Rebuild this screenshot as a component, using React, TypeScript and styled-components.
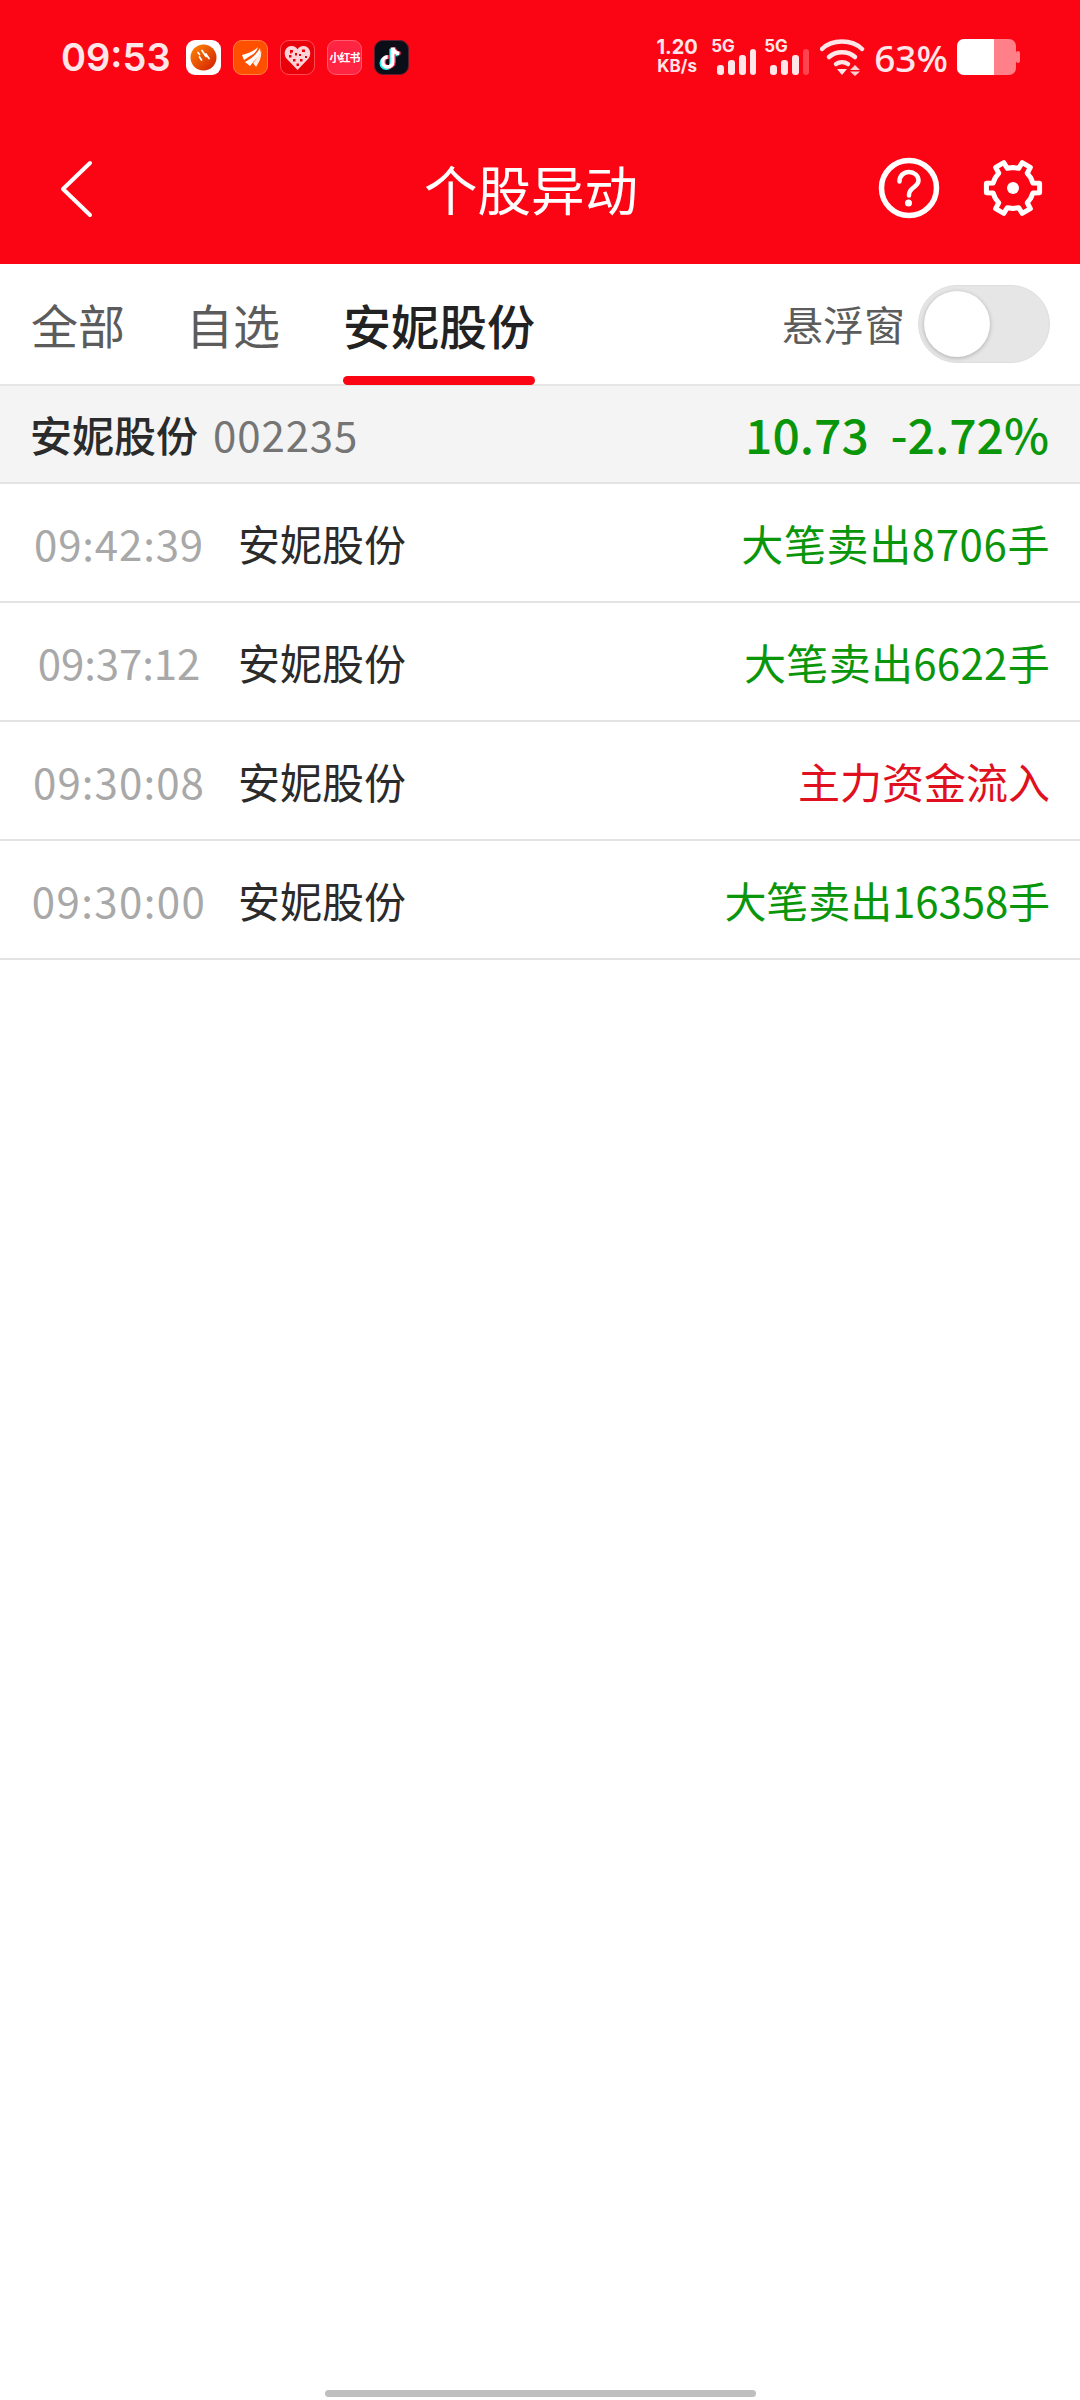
import React from "react";
import styled, { createGlobalStyle } from "styled-components";

const RED = "#fb0514";
const GREEN = "#0a960a";
const FONT = `"Noto Sans CJK SC", "Noto Sans", sans-serif`;

const Global = createGlobalStyle`
  html, body { margin: 0; padding: 0; background: #fff; }
  body { font-family: ${FONT}; }
  * { box-sizing: border-box; }
`;

const Page = styled.div`
  width: 1080px;
  height: 2400px;
  display: flex;
  flex-direction: column;
  background: #fff;
  overflow: hidden;
`;

const Top = styled.header`
  background: ${RED};
  height: 264px;
  display: flex;
  flex-direction: column;
  color: #fff;
`;

const StatusBar = styled.div`
  height: 112px;
  padding: 2px 60px 0 61px;
  display: flex;
  align-items: center;
  justify-content: space-between;
`;

const StatusLeft = styled.div`
  display: flex;
  align-items: center;
  gap: 12px;
`;

const Clock = styled.span`
  font-family: "Inter", "Noto Sans", sans-serif;
  font-size: 38px;
  font-weight: 600;
  color: #ffe6e8;
  width: 107px;
  margin-right: 6px;
  white-space: nowrap;
`;

const AppIcon = styled.span<{ $bg: string; $edge?: string }>`
  width: 35px;
  height: 35px;
  border-radius: 9px;
  background: ${(p) => p.$bg};
  border: 1px solid ${(p) => p.$edge || "transparent"};
  display: flex;
  align-items: center;
  justify-content: center;
  overflow: hidden;
`;

const XhsText = styled.span`
  font-size: 11px;
  font-weight: 700;
  color: #fff;
  white-space: nowrap;
  letter-spacing: -1px;
`;

const StatusRight = styled.div`
  display: flex;
  align-items: center;
`;

const Speed = styled.div`
  width: 46px;
  margin-right: 14px;
  display: flex;
  flex-direction: column;
  align-items: center;
  font-family: "Inter", "Noto Sans", sans-serif;
  font-weight: 700;
  color: #ffe6e8;
  line-height: 19px;
  font-size: 20px;
  white-space: nowrap;
`;

const SpeedUnit = styled.span`
  font-size: 17px;
`;

const Signal = styled.div`
  position: relative;
  width: 42px;
  height: 36px;
  margin-right: 11px;
`;

const SignalLabel = styled.span`
  position: absolute;
  left: -3px;
  top: -2px;
  font-family: "Inter", "Noto Sans", sans-serif;
  font-size: 17px;
  line-height: 18px;
  font-weight: 700;
  color: #ffe6e8;
`;

const Percent = styled.span`
  font-family: "Noto Sans", sans-serif;
  font-size: 37px;
  font-weight: 500;
  color: #ffe6e8;
  margin: 0 9px 0 8px;
  white-space: nowrap;
`;

const Nav = styled.nav`
  position: relative;
  flex: 1;
  padding: 0 37px 0 59px;
  display: flex;
  align-items: flex-start;
  justify-content: space-between;
`;

const NavTitle = styled.h1`
  position: absolute;
  left: 0;
  right: 0;
  top: 40px;
  margin: 0;
  text-align: center;
  font-size: 53.5px;
  line-height: 72px;
  font-weight: 400;
  color: #fff;
  padding-right: 18px;
  pointer-events: none;
`;

const BackButton = styled.span`
  margin-top: 47px;
  display: block;
  height: 60px;
`;

const NavActions = styled.div`
  margin-top: 45px;
  display: flex;
  gap: 43px;
  align-items: center;
`;

const Tabs = styled.div`
  height: 122px;
  padding: 0 30px 0 31px;
  border-bottom: 2px solid #e6e6e6;
  display: flex;
  align-items: stretch;
`;

const Tab = styled.div<{ $active?: boolean }>`
  position: relative;
  margin-right: ${(p) => (p.$active ? "0" : "61px")};
  margin-left: ${(p) => (p.$active ? "2px" : "0")};
  padding-top: 27px;
  font-size: ${(p) => (p.$active ? "48px" : "47px")};
  line-height: 66px;
  font-weight: ${(p) => (p.$active ? 500 : 400)};
  color: ${(p) => (p.$active ? "#222" : "#5c5c5c")};
  white-space: nowrap;

  ${(p) =>
    p.$active &&
    `&::after {
      content: "";
      position: absolute;
      left: 0;
      right: 0;
      bottom: -1px;
      height: 9px;
      border-radius: 5px;
      background: ${RED};
    }`}
`;

const FloatBox = styled.div`
  margin-left: auto;
  display: flex;
  align-items: center;
  gap: 13px;
`;

const FloatLabel = styled.span`
  font-size: 41px;
  color: #5c5c5c;
  margin-bottom: 2px;
`;

const Toggle = styled.div`
  position: relative;
  width: 132px;
  height: 78px;
  border-radius: 39px;
  background: #e6e6e6;
  border: 1px solid #dedede;
`;

const Knob = styled.span`
  position: absolute;
  left: 5px;
  top: 5px;
  width: 66px;
  height: 66px;
  border-radius: 50%;
  background: #fff;
  box-shadow: 0 1px 4px rgba(0, 0, 0, 0.25);
`;

const Summary = styled.div`
  height: 98px;
  background: #f4f4f4;
  border-bottom: 2px solid #e3e3e3;
  padding: 0 31px 2px 30px;
  display: flex;
  align-items: center;
`;

const SummaryName = styled.span`
  font-size: 42px;
  font-weight: 500;
  color: #2b2b2b;
  margin-right: 15px;
`;

const SummaryCode = styled.span`
  font-size: 42px;
  color: #757575;
  letter-spacing: 0.9px;
`;

const SummaryQuote = styled.span`
  margin-left: auto;
  font-size: 48px;
  font-weight: 500;
  color: ${GREEN};
  white-space: pre;
`;

const Row = styled.div`
  height: 119px;
  border-bottom: 2px solid #e3e3e3;
  display: grid;
  grid-template-columns: 238px 1fr auto;
  align-items: center;
  padding: 0 30px 1px 0;
`;

const Time = styled.span<{ $track: number }>`
  font-size: 42px;
  text-align: center;
  color: #a8a8a8;
  letter-spacing: ${(p) => p.$track}px;
`;

const Name = styled.span`
  font-size: 42px;
  color: #2b2b2b;
`;

const Event = styled.span<{ $up?: boolean; $track: number }>`
  font-size: 42px;
  color: ${(p) => (p.$up ? "#e0101f" : GREEN)};
  letter-spacing: ${(p) => p.$track}px;
  white-space: nowrap;
`;

const Spacer = styled.div`
  flex: 1;
`;

const HomeBar = styled.div`
  width: 431px;
  height: 7px;
  border-radius: 4px;
  background: #bfbfbf;
  margin: 0 auto 3px;
`;

const gearPath = (() => {
  const c = 30;
  const pts: string[] = [];
  for (let i = 0; i < 6; i++) {
    const a = i * 60;
    [
      [a - 30, 20.5],
      [a - 14, 20.5],
      [a - 10, 27],
      [a + 10, 27],
      [a + 14, 20.5],
    ].forEach(([d, r]) => {
      const t = (d * Math.PI) / 180;
      pts.push(`${(c + r * Math.cos(t)).toFixed(2)} ${(c + r * Math.sin(t)).toFixed(2)}`);
    });
  }
  return `M${pts.join("L")}Z`;
})();

const SignalBars = ({ weakLast }: { weakLast?: boolean }) => (
  <svg width="42" height="36" viewBox="0 0 42 36">
    <rect x="3" y="26" width="7" height="10" rx="3" fill="#ffe6e8" />
    <rect x="14" y="21" width="7" height="15" rx="3" fill="#ffe6e8" />
    <rect x="25" y="16" width="7" height="20" rx="3" fill="#ffe6e8" />
    <rect x="36" y="10" width="6" height="26" rx="3" fill={weakLast ? "#ff4450" : "#ffe6e8"} />
  </svg>
);

const rows = [
  { time: "09:42:39", track: 0.85, event: "大笔卖出8706手", eventTrack: 0.6 },
  { time: "09:37:12", track: -0.1, event: "大笔卖出6622手", eventTrack: 0.3 },
  { time: "09:30:08", track: 1.1, event: "主力资金流入", up: true, eventTrack: 0 },
  { time: "09:30:00", track: 1.4, event: "大笔卖出16358手", eventTrack: -0.1 },
];

export default function App() {
  return (
    <Page>
      <Global />
      <Top>
        <StatusBar>
          <StatusLeft>
            <Clock>09:53</Clock>
            <AppIcon $bg="#fff">
              <svg width="31" height="31" viewBox="0 0 31 31">
                <defs>
                  <linearGradient id="sn" x1="0" y1="0" x2="1" y2="1">
                    <stop offset="0" stopColor="#ff8a00" />
                    <stop offset="1" stopColor="#d01a05" />
                  </linearGradient>
                </defs>
                <circle cx="15.5" cy="15.5" r="13" fill="url(#sn)" />
                <path d="M10 10.500l1.500 2M14 8.500l4 6M11.500 15l2 3M18 12l3 4.500" stroke="#fff" strokeWidth="1.700" strokeLinecap="round" />
              </svg>
            </AppIcon>
            <AppIcon $bg="#ff5000" $edge="#ff8040">
              <svg width="30" height="30" viewBox="0 0 30 30">
                <path d="M6 13c5-1 12-4 16-8-1 4-4 7-8 9l-6 4z" fill="#fff" />
                <path d="M9 20c6-3 12-8 15-14 1 5-1 9-6 13l-4 5z" fill="#fff" />
                <path d="M17 21c4-4 7-9 8-13 1 6-1 11-5 17z" fill="#fff" opacity="0.9" />
              </svg>
            </AppIcon>
            <AppIcon $bg="#e8000b" $edge="#ff4a52">
              <svg width="29" height="29" viewBox="0 0 29 29">
                <path d="M14.500 27L3 15C0 10 2.500 3 8.500 3c3 0 5 1.500 6 3.500 1-2 3-3.500 6-3.500 6 0 8.500 7 5.500 12z" fill="#fcd3d7" />
                <path d="M7 7h3v2.500H7zM12 10h2v2.500h-2zM19 6.500h3V9h-3zM16 11h2v2h-2zM6 12h2.500v2.500H6zM22 13h2v2h-2zM10 16h2.500v2.500H10zM17 16h2.500v2.500H17zM13.500 20.500h2.500V23h-2.500zM7 9.500h1.500v1H7z" fill="#e8000b" />
              </svg>
            </AppIcon>
            <AppIcon $bg="#ff2442" $edge="#ff5a70">
              <XhsText>小红书</XhsText>
            </AppIcon>
            <AppIcon $bg="#0b0d17" $edge="#5a2030">
              <svg width="31" height="31" viewBox="0 0 28 28">
                <path d="M15 5v13a4.500 4.500 0 1 1-4.500-4.500M15 5c.5 3 3 5 6 5.500" fill="none" stroke="#25f4ee" strokeWidth="3.400" transform="translate(-1.200 1)" />
                <path d="M15 5v13a4.500 4.500 0 1 1-4.500-4.500M15 5c.5 3 3 5 6 5.500" fill="none" stroke="#fe2c55" strokeWidth="3.400" transform="translate(1.200 0)" />
                <path d="M15 5v13a4.500 4.500 0 1 1-4.500-4.500M15 5c.5 3 3 5 6 5.500" fill="none" stroke="#fff" strokeWidth="3.400" />
              </svg>
            </AppIcon>
          </StatusLeft>
          <StatusRight>
            <Speed>
              <span>1.20</span>
              <SpeedUnit>KB/s</SpeedUnit>
            </Speed>
            <Signal>
              <SignalLabel>5G</SignalLabel>
              <SignalBars />
            </Signal>
            <Signal>
              <SignalLabel>5G</SignalLabel>
              <SignalBars weakLast />
            </Signal>
            <svg width="46" height="38" viewBox="0 0 46 38">
              <path d="M2 11C12 1 32 1 42 11" fill="none" stroke="#ffe6e8" strokeWidth="4.500" strokeLinecap="round" />
              <path d="M9 19c7-6.500 19-6.500 26 0" fill="none" stroke="#ffe6e8" strokeWidth="4.500" strokeLinecap="round" />
              <path d="M16 26c3.500-2.500 8.500-2.500 12 0" fill="none" stroke="#ffe6e8" strokeWidth="4.500" strokeLinecap="round" />
              <path d="M17 31h10l-5 6z" fill="#ffe6e8" />
              <path d="M35 27l5 5H30zM30 33.500h10l-5 4.500z" fill="#ffd0d4" />
            </svg>
            <Percent>63%</Percent>
            <svg width="63" height="36" viewBox="0 0 63 36">
              <rect x="0" y="0" width="59" height="36" rx="7" fill="#ff8089" />
              <path d="M7 0h30v36H7a7 7 0 0 1-7-7V7a7 7 0 0 1 7-7z" fill="#fff" />
              <rect x="59" y="12" width="4" height="12" rx="2" fill="#ff8089" />
            </svg>
          </StatusRight>
        </StatusBar>
        <Nav>
          <NavTitle>个股异动</NavTitle>
          <BackButton>
            <svg width="36" height="60" viewBox="0 0 36 60">
              <path d="M31 4L4 30l27 26" fill="none" stroke="#fff" strokeWidth="4" strokeLinecap="round" strokeLinejoin="round" />
            </svg>
          </BackButton>
          <NavActions>
            <svg width="62" height="62" viewBox="0 0 62 62">
              <circle cx="31" cy="31" r="27.500" fill="none" stroke="#fff" strokeWidth="5.500" />
              <path d="M21.500 24.500c0-6 4.500-9.500 9.500-9.500s9.500 3.500 9.500 8.500c0 6.500-9.500 7-9.500 14v1" fill="none" stroke="#fff" strokeWidth="4.500" strokeLinecap="round" />
              <circle cx="30.500" cy="46" r="3.500" fill="#fff" />
            </svg>
            <svg width="60" height="60" viewBox="0 0 60 60">
              <path d={gearPath} fill="none" stroke="#fff" strokeWidth="5" strokeLinejoin="round" />
              <circle cx="30" cy="30" r="6" fill="#fff" />
            </svg>
          </NavActions>
        </Nav>
      </Top>
      <Tabs>
        <Tab>全部</Tab>
        <Tab>自选</Tab>
        <Tab $active>安妮股份</Tab>
        <FloatBox>
          <FloatLabel>悬浮窗</FloatLabel>
          <Toggle>
            <Knob />
          </Toggle>
        </FloatBox>
      </Tabs>
      <Summary>
        <SummaryName>安妮股份</SummaryName>
        <SummaryCode>002235</SummaryCode>
        <SummaryQuote>10.73  -2.72%</SummaryQuote>
      </Summary>
      {rows.map((r) => (
        <Row key={r.time}>
          <Time $track={r.track}>{r.time}</Time>
          <Name>安妮股份</Name>
          <Event $up={r.up} $track={r.eventTrack}>
            {r.event}
          </Event>
        </Row>
      ))}
      <Spacer />
      <HomeBar />
    </Page>
  );
}
